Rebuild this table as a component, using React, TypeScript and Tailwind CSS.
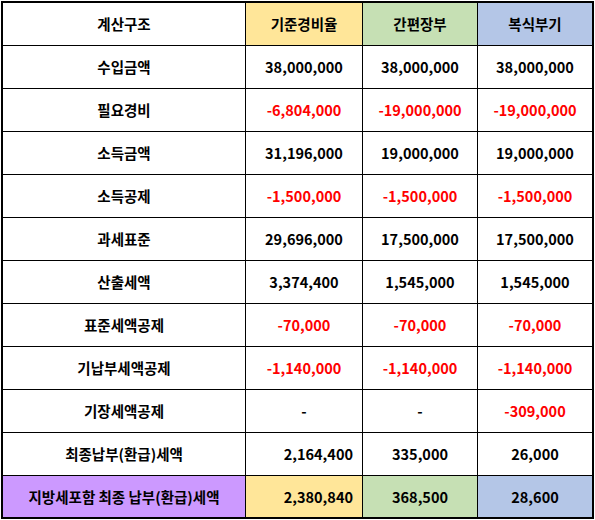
const font = { fontFamily: '"Noto Sans CJK KR", "Noto Sans", sans-serif' };

type Row = { label: string; values: string[]; red?: boolean[] };

const rows: Row[] = [
  { label: "수입금액", values: ["38,000,000", "38,000,000", "38,000,000"] },
  { label: "필요경비", values: ["-6,804,000", "-19,000,000", "-19,000,000"], red: [true, true, true] },
  { label: "소득금액", values: ["31,196,000", "19,000,000", "19,000,000"] },
  { label: "소득공제", values: ["-1,500,000", "-1,500,000", "-1,500,000"], red: [true, true, true] },
  { label: "과세표준", values: ["29,696,000", "17,500,000", "17,500,000"] },
  { label: "산출세액", values: ["3,374,400", "1,545,000", "1,545,000"] },
  { label: "표준세액공제", values: ["-70,000", "-70,000", "-70,000"], red: [true, true, true] },
  { label: "기납부세액공제", values: ["-1,140,000", "-1,140,000", "-1,140,000"], red: [true, true, true] },
  { label: "기장세액공제", values: ["-", "-", "-309,000"], red: [false, false, true] },
];

const cell = "h-[42px] flex items-center justify-center bg-white";

const App = () => {
  return (
    <div className="w-[595px] h-[520px] bg-white pt-px pl-px" style={font}>
      <div className="w-[593px] border-2 border-black">
        <div className="grid grid-cols-[242px_116px_114px_114px] gap-px bg-black text-[14.5px] font-bold text-black">
          {/* header */}
          <div className={cell}>계산구조</div>
          <div className="h-[42px] flex items-center justify-center bg-[#ffe699]">기준경비율</div>
          <div className="h-[42px] flex items-center justify-center bg-[#c6e0b4]">간편장부</div>
          <div className="h-[42px] flex items-center justify-center bg-[#b4c6e7]">복식부기</div>

          {rows.map((r) => (
            <div key={r.label} className="contents">
              <div className={cell}>{r.label}</div>
              {r.values.map((v, i) => (
                <div
                  key={i}
                  className={cell + (r.red?.[i] ? " text-[#ff0000]" : "")}
                >
                  {v}
                </div>
              ))}
            </div>
          ))}

          <div className={cell}>최종납부(환급)세액</div>
          <div className="h-[42px] flex items-center justify-end pr-[9px] bg-white">2,164,400</div>
          <div className={cell}>335,000</div>
          <div className={cell}>26,000</div>

          <div className="h-[41px] flex items-center justify-center bg-[#cc99ff]">
            지방세포함 최종 납부(환급)세액
          </div>
          <div className="h-[41px] flex items-center justify-end pr-[9px] bg-[#ffe699]">2,380,840</div>
          <div className="h-[41px] flex items-center justify-center bg-[#c6e0b4]">368,500</div>
          <div className="h-[41px] flex items-center justify-center bg-[#b4c6e7]">28,600</div>
        </div>
      </div>
    </div>
  );
};

export default App;
